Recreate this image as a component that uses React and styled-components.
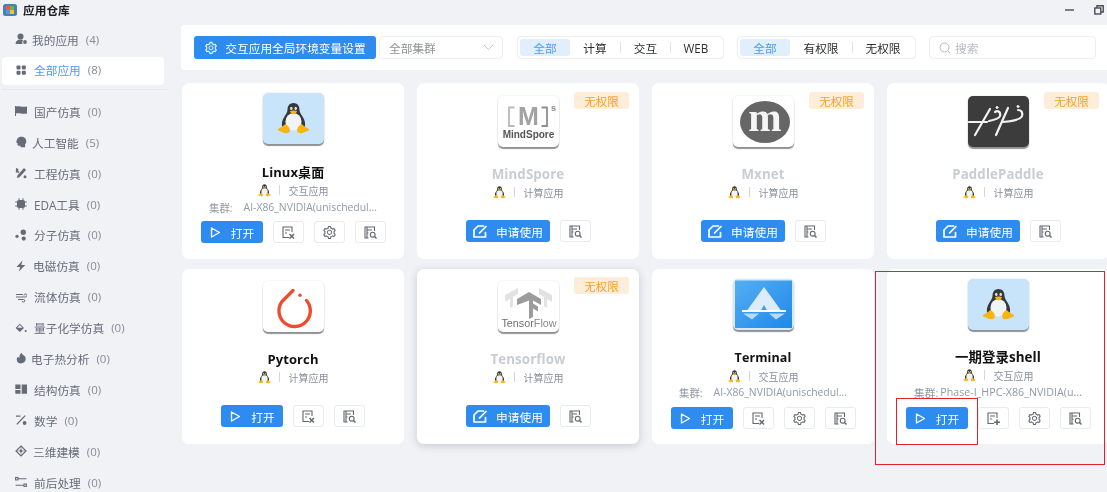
import React from "react";
import styled, { createGlobalStyle } from "styled-components";
import { AiOutlineSetting } from "react-icons/ai";

const FONT = `"Open Sans", "Noto Sans CJK SC", sans-serif`;

const Global = createGlobalStyle`
  html, body { margin: 0; padding: 0; background: #f0f2f6; }
  * { box-sizing: border-box; }
  body { font-family: ${FONT}; }
`;

const Page = styled.div`
  position: relative;
  width: 1107px;
  height: 492px;
  overflow: hidden;
  background: #f0f2f6;
  filter: blur(0.45px);
`;
const TitleBar = styled.header`
  height: 25px;
  display: flex;
  align-items: center;
  padding: 0 3px 6px 3px;
`;
const AppName = styled.span`
  margin-left: 6px;
  font-size: 11.7px;
  font-weight: 700;
  color: #1d1f24;
`;
const WinControls = styled.div`
  margin-left: auto;
  display: flex;
  align-items: center;
  gap: 19px;
  color: #4a4d55;
`;
const Body = styled.div`
  display: flex;
`;
const Sidebar = styled.nav`
  width: 172px;
  flex: none;
  padding-left: 2px;
`;
const Item = styled.div`
  width: 162px;
  height: ${(p) => (p.$active ? 28 : 30.9)}px;
  margin: ${(p) => (p.$active ? "1px 0 2px" : "0")};
  display: flex;
  align-items: center;
  padding: 0 0 2px 13px;
  border-radius: 4px;
  background: ${(p) => (p.$active ? "#fff" : "transparent")};
  color: ${(p) => (p.$active ? "#4a9bf5" : "#666c7a")};
  font-size: 11.7px;
  white-space: nowrap;
`;
const ItemIcon = styled.span`
  width: 12px;
  height: 12px;
  flex: none;
  display: flex;
  color: #666b78;
  margin-right: ${(p) => p.$gap}px;
`;
const Count = styled.span`
  margin-left: 7px;
  color: #858a96;
  font-size: 11.5px;
`;
const Divider = styled.div`
  width: 165px;
  height: 1px;
  margin: 4px 0 7px;
  background: #e6e8ec;
`;
const Main = styled.main`
  flex: 1;
  min-width: 0;
  margin-left: 9px;
`;
const Toolbar = styled.div`
  height: 45px;
  display: flex;
  align-items: center;
  padding-left: 13px;
  background: #fff;
  border-radius: 3px 0 0 3px;
`;
const Primary = styled.button`
  height: ${(p) => p.$h || 22}px;
  width: ${(p) => p.$w}px;
  flex: none;
  border: 0;
  border-radius: 3px;
  background: #2e8cf0;
  color: #fff;
  font: 11.7px ${FONT};
  display: flex;
  align-items: center;
  justify-content: center;
  gap: ${(p) => p.$gap || 6}px;
  padding: 0;
`;
const Select = styled.div`
  width: 124px;
  height: 23px;
  margin-left: 3px;
  display: flex;
  align-items: center;
  justify-content: space-between;
  padding: 0 8px 0 9px;
  border: 1px solid #eceef2;
  border-radius: 4px;
  font-size: 11.7px;
  color: #8f9298;
`;
const Segment = styled.div`
  height: 23px;
  margin-left: ${(p) => p.$ml}px;
  display: flex;
  align-items: center;
  padding: 0 2px;
  border: 1px solid #eceef2;
  border-radius: 4px;
  flex: none;
`;
const SegItem = styled.span`
  width: ${(p) => p.$w}px;
  height: 17px;
  display: flex;
  align-items: center;
  justify-content: center;
  border-radius: 3px;
  font-size: 11.7px;
  color: ${(p) => (p.$active ? "#4a9bf5" : "#2c2e33")};
  background: ${(p) => (p.$active ? "#e1effd" : "transparent")};
`;
const SegSep = styled.i`
  width: 1px;
  height: 11px;
  background: #e2e4e8;
  flex: none;
`;
const Search = styled.div`
  width: 167px;
  height: 23px;
  margin-left: 13px;
  display: flex;
  align-items: center;
  gap: 4px;
  padding-left: 9px;
  border: 1px solid #eceef2;
  border-radius: 4px;
  font-size: 11.7px;
  color: #b9bcc4;
`;
const Grid = styled.div`
  margin: 13px 0 0 1px;
  display: grid;
  grid-template-columns: repeat(4, 222px);
  grid-template-rows: 176px 175px;
  column-gap: 13px;
  row-gap: 10px;
`;
const Card = styled.article`
  position: relative;
  display: flex;
  flex-direction: column;
  align-items: center;
  padding: ${(p) => p.$top}px 0 ${(p) => p.$bottom}px;
  background: #fff;
  border-radius: 7px;
  box-shadow: ${(p) => (p.$raised ? "0 2px 9px rgba(40,50,70,.2)" : "none")};
`;
const Badge = styled.span`
  position: absolute;
  top: ${(p) => p.$top}px;
  right: 10px;
  width: 55px;
  height: 17px;
  display: flex;
  align-items: center;
  justify-content: center;
  background: #feeed9;
  border-radius: 3px;
  color: #f7a020;
  font-size: 11.5px;
`;
const Tile = styled.div`
  width: 61px;
  height: 51px;
  flex: none;
  border-radius: 5px;
  overflow: hidden;
  background: ${(p) => p.$bg};
  box-shadow: 0 2px 1px rgba(60, 60, 60, 0.55), 0 0 2px rgba(0, 0, 0, 0.12);
  display: flex;
  svg { display: block; }
`;
const Title = styled.h3`
  margin: ${(p) => p.$mt}px 0 0;
  height: 18px;
  line-height: 18px;
  font-size: ${(p) => p.$size}px;
  font-weight: 700;
  letter-spacing: 0.1px;
  white-space: nowrap;
  color: ${(p) => (p.$dim ? "#c9ccd3" : "#111")};
`;
const Meta = styled.div`
  margin-top: 1px;
  height: 16px;
  display: flex;
  align-items: center;
  font-size: 10px;
  color: #8a90a0;
`;
const MetaSep = styled.i`
  width: 1px;
  height: 10px;
  margin: 0 9px 0 8px;
  background: #d4d7dd;
`;
const Cluster = styled.div`
  height: 16px;
  width: 100%;
  margin-top: ${(p) => p.$mt || 0}px;
  display: flex;
  align-items: center;
  justify-content: center;
  gap: ${(p) => p.$gap}px;
  font-size: ${(p) => p.$size}px;
  color: #9298a6;
  white-space: nowrap;
`;
const Actions = styled.div`
  margin-top: auto;
  display: flex;
  gap: 10px;
`;
const IconButton = styled.button`
  width: 31px;
  height: 22px;
  padding: 0;
  background: #fff;
  border: 1px solid #e8eaee;
  border-radius: 3px;
  color: #62666e;
  display: flex;
  align-items: center;
  justify-content: center;
`;
const Mark = styled.div`
  position: absolute;
  left: ${(p) => p.$x}px;
  top: ${(p) => p.$y}px;
  width: ${(p) => p.$w}px;
  height: ${(p) => p.$h}px;
  border: 1.5px solid #e5202e;
  pointer-events: none;
`;
const LogoCenter = styled.div`
  width: 100%;
  display: flex;
  align-items: center;
  justify-content: center;
`;

/* ---------- drawings ---------- */
const Penguin = ({ size = 36 }) => (
  <svg width={size} height={size} viewBox="0 0 36 36">
    <path d="M18 1c-4 0-6.500 3-6.500 7 0 3-1.500 5-3.500 8-2.500 4-3.500 8-2 12h24c1.500-4 .5-8-2-12-2-3-3.500-5-3.500-8 0-4-2.500-7-6.500-7z" fill="#37383d" />
    <ellipse cx="18" cy="21.500" rx="8.800" ry="9.500" fill="#f2f3f4" />
    <ellipse cx="15.600" cy="7" rx="1.400" ry="1.800" fill="#ddd" />
    <ellipse cx="20.400" cy="7" rx="1.400" ry="1.800" fill="#ddd" />
    <path d="M14 10.200c1.500-1.300 6.500-1.300 8 0-1 2-2.800 3.300-4 3.300s-3-1.300-4-3.300z" fill="#f6b40e" />
    <path d="M9 24c-2 2.500-5 4-8 5.500-.5 2 3 2.500 5 3.500 3 1.500 7 1.500 8-1 .5-3-2-7-5-8zM27 24c2 2.500 5 4 8 5.500.5 2-3 2.500-5 3.500-3 1.500-7 1.500-8-1-.5-3 2-7 5-8z" fill="#f8b411" />
  </svg>
);
const Svg = ({ s = 12, children, vb = "0 0 12 12" }) => (
  <svg width={s} height={s} viewBox={vb} fill="currentColor">{children}</svg>
);
const navIcons = {
  mine: <Svg><circle cx="5.500" cy="3.400" r="3" /><path d="M.6 11c0-3 2-4.600 4.900-4.600 1.200 0 2 .3 2.700.7-1 .7-1.200 2.400-.6 3.900z" /><circle cx="10" cy="9" r="1.900" /></Svg>,
  all: <Svg><rect x="1.500" y="1.500" width="4" height="4" rx="1" /><rect x="6.800" y="1.500" width="4" height="4" rx="1" /><rect x="1.500" y="6.800" width="4" height="4" rx="1" /><rect x="6.800" y="6.800" width="4" height="4" rx="1" /></Svg>,
  flag: <Svg><path d="M0 1h1v10H0zM1 1.500c3-1 5 .8 11 0v7c-6 .8-8-1-11 0z" /></Svg>,
  ai: <Svg><path d="M6.300.8c3 0 5 2 5 4.600 0 1.200-.5 2-1.200 2.800v3H5.500V9.800H3.700c-.8 0-1.200-.6-1.200-1.200V7L1.300 6.500c.3-3.300 1.700-5.700 5-5.700z" /></Svg>,
  eng: <Svg><path d="M1 1l2.500 1-.5 1.500 1.500 1.500-1.300 1.300L2.200 5.300.8 5.800zM9 1l2 2-6.500 7.200-2.700.8.8-2.800z" /><circle cx="10" cy="9.800" r="1.500" /></Svg>,
  eda: <Svg><rect x="2" y="2" width="8" height="8" rx="1.800" /><path d="M3.500.3h1v2h-1zM7.500.3h1v2h-1zM3.500 9.700h1v2h-1zM7.500 9.700h1v2h-1zM.2 3.500h2v1h-2zM.2 7.500h2v1h-2zM9.800 3.500h2v1h-2zM9.800 7.500h2v1h-2z" /></Svg>,
  mol: <Svg><circle cx="8.300" cy="3.200" r="2.700" /><circle cx="2" cy="7.300" r="1.600" /><circle cx="8.700" cy="9.600" r="2.100" /></Svg>,
  bolt: <Svg><path d="M7.500.5L1.500 7h3.700L3.800 11.500 10.300 5H6.300z" /></Svg>,
  wind: <Svg><path d="M1 3.500h7M1 6h9.500a1.500 1.500 0 1 0-1.500-1.500M3 8.500h5.500a1.300 1.300 0 1 1-1.300 1.300" fill="none" stroke="currentColor" strokeWidth="1" /></Svg>,
  bucket: <Svg><path d="M4.800 1.800L.6 6l4.200 4 4.200-4zM2.300 5.700h5.200L4.800 3z" fillRule="evenodd" /><circle cx="10.700" cy="9" r="1.100" /></Svg>,
  heat: <Svg><path d="M6.500.8c.3 1.800 2 2 3.500 3.800 1.400 2 .8 6.800-4 6.800-4.300 0-5.300-4.700-3-7 .5 1 1 1.300 1.500 1.300C4.300 3.700 5 2 6.500.8z" /></Svg>,
  struct: <Svg><path d="M.3 1.500h5.200v4.400H.3zM.3 7h5.200v3.700H.3zM6.700 1.500H12v9.200H6.700z" /></Svg>,
  math: <Svg><path d="M1 1.500h4.500v1.200H1zM9.700 1.200l1 .8-8.400 8.800-1-.8z" /><circle cx="9.600" cy="9" r="1.900" /></Svg>,
  cube: <Svg><path d="M6 1l5 5-5 5-5-5z" fill="none" stroke="currentColor" strokeWidth="1.200" /><circle cx="6" cy="6" r="1.400" /><path d="M1 6h10M6 1v10" stroke="currentColor" strokeWidth=".5" /></Svg>,
  flow: <Svg><g fill="none" stroke="currentColor" strokeWidth="1.100"><rect x=".6" y="1.500" width="2.400" height="2.400" /><rect x="9" y="8" width="2.400" height="2.400" /><path d="M3 2.700h8.500M.6 9.200H9" /></g></Svg>,
};

const PlayIcon = () => (
  <svg width="13" height="13" viewBox="0 0 13 13" fill="none" stroke="#fff" strokeWidth="1.300" strokeLinejoin="round"><path d="M2.500 2l8 4.500-8 4.500z" /></svg>
);
const ApplyIcon = () => (
  <svg width="16" height="15" viewBox="0 0 16 15" fill="none" stroke="#fff" strokeWidth="1.700" strokeLinejoin="round" strokeLinecap="round"><path d="M11.500 2H6L2 6v7h11.500V8.500" /><path d="M7.500 9L14 2.500" /></svg>
);
const DocBase = ({ children }) => (
  <svg width="15" height="15" viewBox="0 0 15 15" fill="none" stroke="currentColor" strokeWidth="1.100">
    <path d="M8 12.500H2V2h9v5" />
    <path d="M4 5h5M4 8h2" />
    {children}
  </svg>
);
const DocX = () => <DocBase><path d="M8.500 9l4.500 4.500M13 9l-4.500 4.500" strokeWidth="1.500" /></DocBase>;
const DocPlus = () => <DocBase><path d="M11 8.500v5.500M8 11.200h6" strokeWidth="1.600" /></DocBase>;
const DocSearch = () => (
  <svg width="15" height="15" viewBox="0 0 15 15" fill="none" stroke="currentColor" strokeWidth="1.100">
    <path d="M5.500 13H2V2h9.500v4" /><path d="M4 5h5M4 8h1.500M4 2v11" />
    <circle cx="9.700" cy="9.700" r="2.400" /><path d="M11.500 11.500l2 2" strokeWidth="1.400" />
  </svg>
);

const Mindspore = () => (
  <svg width="61" height="51" viewBox="0 0 61 51" fontFamily="Liberation Sans, sans-serif">
    <path d="M16.500 11.500H11v18.500h5.500" fill="none" stroke="#b9b9b9" strokeWidth="1.800" />
    <path d="M43.500 11.500H49v18.500h-5.500" fill="none" stroke="#8e8e8e" strokeWidth="1.800" />
    <text x="30.500" y="29" textAnchor="middle" fontSize="25" fontWeight="700" fill="#a2a2a2">M</text>
    <text x="53" y="15" fontSize="9" fontWeight="700" fill="#888">s</text>
    <text x="30.500" y="42" textAnchor="middle" fontSize="10" fontWeight="700" fill="#555">MindSpore</text>
  </svg>
);
const Mxnet = () => (
  <svg width="61" height="51" viewBox="0 0 61 51">
    <ellipse cx="32" cy="26" rx="25" ry="21" fill="#666" />
    <text x="32" y="35" textAnchor="middle" fontSize="40" fontWeight="700" fontFamily="Liberation Serif, serif" fill="#f5f5f5">m</text>
  </svg>
);
const Paddle = () => (
  <svg width="61" height="51" viewBox="0 0 61 51" fill="none" stroke="#f2f2f2" strokeLinecap="round">
    <path d="M1 26h18" strokeWidth="2.200" />
    <path d="M22 13L7 39M40 12L28 39" strokeWidth="2.200" />
    <path d="M27 16c3-2 6 0 5 4-1 3-6 4-11 5" strokeWidth="2.200" />
    <path d="M50 14c3 0 5 2 4 6-1 3-8 5-19 6" strokeWidth="2.200" />
    <circle cx="29" cy="11.500" r="1" fill="#fff" /><circle cx="50" cy="10.500" r="1" fill="#fff" />
  </svg>
);
const Torch = () => (
  <svg width="61" height="51" viewBox="0 0 61 51" fill="none" stroke="#ee4c2c" strokeLinecap="round">
    <path d="M30 9.500L19 20.500A15.700 15.700 0 1 0 43.500 19.500" strokeWidth="3.400" />
    <circle cx="37" cy="14.300" r="1.700" fill="#ee4c2c" stroke="none" />
  </svg>
);
const TFlow = () => (
  <svg width="61" height="51" viewBox="0 0 61 51">
    <path d="M7 14l13-7v6l-5 3v9l-3 2v-9l-5 3zM54 14L41 7v6l5 3v9l3 2v-9l5 3z" fill="#e2e2e2" />
    <path d="M19 18L31 11l12 7v6l-8-4.500v3l5 3v5l-5-3V36l-4 2V19.500L19 24z" fill="#9c9c9c" />
    <text x="31" y="46" textAnchor="middle" fontSize="10.800" fontFamily="Liberation Sans, sans-serif" fill="#707070">Tensor<tspan fill="#8c8c8c">Flow</tspan></text>
  </svg>
);
const TerminalLogo = () => (
  <svg width="61" height="51" viewBox="0 0 61 51">
    <defs><linearGradient id="tg" x1="0" y1="0" x2="1" y2="1"><stop offset="0" stopColor="#55aef2" /><stop offset="1" stopColor="#1f88ea" /></linearGradient></defs>
    <rect x="2" y="1.500" width="57" height="47.500" fill="url(#tg)" />
    <path d="M31 8L48 31.500H14z" fill="#dcecfb" />
    <path d="M31 26l-3 5.500h6z" fill="#3f9cec" />
    <path d="M9 32h44" stroke="#fff" strokeWidth="2" />
    <path d="M10 34.500h16l-7 6zM52 34.500H36l7 6z" fill="#b8dcf8" />
  </svg>
);
const PenguinLogo = () => (
  <LogoCenter><Penguin size={33} /></LogoCenter>
);

const cards = [
  { title: "Linux桌面", size: 13, type: "交互应用", cluster: ["集群:", "AI-X86_NVIDIA(unischedul...", 11, 10.4, 1], logo: <PenguinLogo />, bg: "#c8e4fb", top: 10, mt: 19, bottom: 16, open: true, icons: ["x", "gear", "search"] },
  { title: "MindSpore", size: 13.300, type: "计算应用", logo: <Mindspore />, bg: "#fff", top: 13, mt: 18, bottom: 17, icons: ["search"], denied: 9 },
  { title: "Mxnet", size: 13.300, type: "计算应用", logo: <Mxnet />, bg: "#fff", top: 13, mt: 18, bottom: 17, icons: ["search"], denied: 9 },
  { title: "PaddlePaddle", size: 13.300, type: "计算应用", logo: <Paddle />, bg: "#3c3c3c", top: 13, mt: 18, bottom: 17, icons: ["search"], denied: 9 },
  { title: "Pytorch", size: 13, type: "计算应用", logo: <Torch />, bg: "#fff", top: 12, mt: 18, bottom: 17, open: true, icons: ["x", "search"], metaGap: 2 },
  { title: "Tensorflow", size: 13.300, type: "计算应用", logo: <TFlow />, bg: "#fff", top: 12, mt: 18, bottom: 17, icons: ["search"], denied: 8, raised: true, metaGap: 2 },
  { title: "Terminal", size: 12.500, type: "交互应用", cluster: ["集群:", "AI-X86_NVIDIA(unischedul...", 11, 10.4], logo: <TerminalLogo />, bg: "#d6e9fa", top: 10, mt: 19, bottom: 15, open: true, icons: ["x", "gear", "search"] },
  { title: "一期登录shell", size: 13.400, type: "交互应用", cluster: ["集群:", "Phase-I_HPC-X86_NVIDIA(u...", 2, 10.7, 1], logo: <PenguinLogo />, bg: "#c8e4fb", top: 10, mt: 18, bottom: 15, open: true, icons: ["plus", "gear", "search"] },
];

const iconMap = { x: <DocX />, plus: <DocPlus />, gear: <AiOutlineSetting size={15} />, search: <DocSearch /> };

const nav1 = [
  { k: "mine", label: "我的应用", n: 4, gap: 5 },
  { k: "all", label: "全部应用", n: 8, gap: 7, active: true },
];
const nav2 = [
  ["flag", "国产仿真", 0, 7], ["ai", "人工智能", 5, 5], ["eng", "工程仿真", 0, 7], ["eda", "EDA工具", 0, 7],
  ["mol", "分子仿真", 0, 7], ["bolt", "电磁仿真", 0, 6], ["wind", "流体仿真", 0, 7], ["bucket", "量子化学仿真", 0, 7],
  ["heat", "电子热分析", 0, 4], ["struct", "结构仿真", 0, 7], ["math", "数学", 0, 7], ["cube", "三维建模", 0, 6], ["flow", "前后处理", 0, 7],
];

const NavRow = ({ k, label, n, gap, active }) => (
  <Item $active={active}>
    <ItemIcon $gap={gap}>{navIcons[k]}</ItemIcon>
    {label}
    <Count>({n})</Count>
  </Item>
);

const AppCard = ({ c }) => (
  <Card $top={c.top} $bottom={c.bottom} $raised={c.raised}>
    {c.denied && <Badge $top={c.denied}>无权限</Badge>}
    <Tile $bg={c.bg}>{c.logo}</Tile>
    <Title $mt={c.mt} $size={c.size} $dim={!!c.denied}>{c.title}</Title>
    <Meta><Penguin size={13} /><MetaSep />{c.type}</Meta>
    {c.cluster && (
      <Cluster $gap={c.cluster[2]} $size={c.cluster[3]} $mt={c.cluster[4]}><span>{c.cluster[0]}</span><span>{c.cluster[1]}</span></Cluster>
    )}
    <Actions>
      {c.open ? (
        <Primary $w={62} $gap={9}><PlayIcon />打开</Primary>
      ) : (
        <Primary $w={84} $gap={8}><ApplyIcon />申请使用</Primary>
      )}
      {c.icons.map((i) => <IconButton key={i}>{iconMap[i]}</IconButton>)}
    </Actions>
  </Card>
);

export default function App() {
  return (
    <Page>
      <Global />
      <TitleBar>
        <svg width="14" height="12" viewBox="0 0 14 12">
          <rect width="14" height="12" rx="2.500" fill="#4a7fb5" />
          <rect x="3" y="2" width="4" height="4" fill="#e9574e" /><rect x="7" y="2" width="4" height="4" fill="#5fb85a" />
          <rect x="3" y="6" width="4" height="4" fill="#4d9be8" /><rect x="7" y="6" width="4" height="4" fill="#f2c230" />
        </svg>
        <AppName>应用仓库</AppName>
        <WinControls>
          <svg width="10" height="10" viewBox="0 0 10 10"><path d="M0 5h9" stroke="currentColor" strokeWidth="1.400" /></svg>
          <svg width="10" height="10" viewBox="0 0 10 10" fill="none" stroke="currentColor" strokeWidth="1.400"><rect x=".8" y="3" width="6" height="6" /><path d="M3 3V.8h6.200V7H7" /></svg>
        </WinControls>
      </TitleBar>
      <Body>
        <Sidebar>
          {nav1.map((n) => <NavRow key={n.k} {...n} />)}
          <Divider />
          {nav2.map(([k, label, n, gap]) => <NavRow key={k} k={k} label={label} n={n} gap={gap} />)}
        </Sidebar>
        <Main>
          <Toolbar>
            <Primary $w={182} $h={23} $gap={7}><AiOutlineSetting size={14} />交互应用全局环境变量设置</Primary>
            <Select>
              全部集群
              <svg width="11" height="7" viewBox="0 0 11 7" fill="none" stroke="#c4c7cd" strokeWidth="1"><path d="M1 1l4.500 4.500L10 1" /></svg>
            </Select>
            <Segment $ml={14}>
              <SegItem $w={50} $active>全部</SegItem>
              <SegItem $w={50}>计算</SegItem><SegSep />
              <SegItem $w={49}>交互</SegItem><SegSep />
              <SegItem $w={50}>WEB</SegItem>
            </Segment>
            <Segment $ml={13}>
              <SegItem $w={50} $active>全部</SegItem>
              <SegItem $w={62}>有权限</SegItem><SegSep />
              <SegItem $w={60}>无权限</SegItem>
            </Segment>
            <Search>
              <svg width="12" height="12" viewBox="0 0 12 12" fill="none" stroke="#b5b8c0" strokeWidth="1"><circle cx="5.500" cy="5.500" r="4.500" /><path d="M9 9l2 2" /></svg>
              搜索
            </Search>
          </Toolbar>
          <Grid>
            {cards.map((c) => <AppCard key={c.title} c={c} />)}
          </Grid>
        </Main>
      </Body>
      <Mark $x={875} $y={271} $w={230} $h={194} />
      <Mark $x={896} $y={398} $w={82} $h={47} />
    </Page>
  );
}
